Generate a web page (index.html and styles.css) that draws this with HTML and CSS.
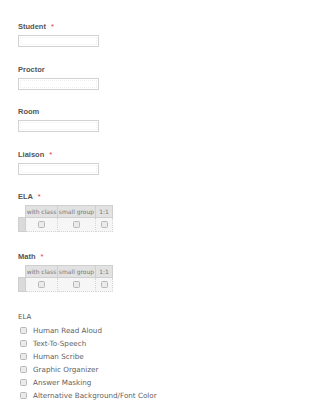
FILE: index.html
```html
<!DOCTYPE html>
<html lang="en">
<head>
    <meta charset="UTF-8">
    <meta name="viewport" content="width=device-width, initial-scale=1.0">
    <link rel="stylesheet" href="styles.css">
</head>
<body>
    <form class="form">
        <div class="field">
            <label class="label">Student <span class="req">*</span></label>
            <input class="text-input" type="text">
        </div>
        <div class="field">
            <label class="label">Proctor</label>
            <input class="text-input" type="text">
        </div>
        <div class="field">
            <label class="label">Room</label>
            <input class="text-input" type="text">
        </div>
        <div class="field">
            <label class="label">Liaison <span class="req">*</span></label>
            <input class="text-input" type="text">
        </div>

        <div class="field field-matrix">
            <label class="label">ELA <span class="req">*</span></label>
            <table class="matrix">
                <tr>
                    <th class="stub-head"></th>
                    <th class="col-a">with class</th>
                    <th class="col-b">small group</th>
                    <th class="col-c">1:1</th>
                </tr>
                <tr>
                    <td class="stub"></td>
                    <td><span class="box"></span></td>
                    <td><span class="box"></span></td>
                    <td><span class="box"></span></td>
                </tr>
            </table>
        </div>

        <div class="field field-matrix">
            <label class="label">Math <span class="req">*</span></label>
            <table class="matrix">
                <tr>
                    <th class="stub-head"></th>
                    <th class="col-a">with class</th>
                    <th class="col-b">small group</th>
                    <th class="col-c">1:1</th>
                </tr>
                <tr>
                    <td class="stub"></td>
                    <td><span class="box"></span></td>
                    <td><span class="box"></span></td>
                    <td><span class="box"></span></td>
                </tr>
            </table>
        </div>

        <div class="field checklist">
            <label class="label label-plain">ELA</label>
            <div class="option"><span class="box"></span>Human Read Aloud</div>
            <div class="option"><span class="box"></span>Text-To-Speech</div>
            <div class="option"><span class="box"></span>Human Scribe</div>
            <div class="option"><span class="box"></span>Graphic Organizer</div>
            <div class="option"><span class="box"></span>Answer Masking</div>
            <div class="option"><span class="box"></span>Alternative Background/Font Color</div>
        </div>
    </form>
</body>
</html>
```

FILE: styles.css
```css
body {
    margin: 0;
    padding: 0;
    background-color: #FFFFFF;
    color: #555;
    font-family: 'DejaVu Sans', Verdana, sans-serif;
    overflow: hidden;
}
.form {
    padding: 22px 0 0 18px;
}
.field {
    margin-bottom: 17.5px;
}
.label {
    display: block;
    height: 10px;
    line-height: 10px;
    margin-bottom: 3px;
    font-family: 'Liberation Sans', Arial, sans-serif;
    font-size: 7.5px;
    font-weight: bold;
    color: #555;
}
.req {
    color: #e53935;
    margin-left: 3px;
    font-weight: normal;
}
.text-input {
    display: block;
    box-sizing: border-box;
    width: 81px;
    height: 12px;
    margin: 0;
    padding: 0;
    border: 1px solid #d2d2d2;
    background-color: #fff;
    outline: 1px dotted #f0f0f0;
    outline-offset: -3px;
}
.field-matrix {
    margin-bottom: 20px;
}
.matrix {
    border-collapse: collapse;
    table-layout: fixed;
    width: 94px;
    font-size: 6px;
    line-height: 8px;
}
.matrix th {
    box-sizing: border-box;
    height: 12px;
    padding: 0;
    font-weight: normal;
    color: #777;
    background-color: #e2e2e2;
    border: 1px solid #cfcfcf;
    text-align: center;
    white-space: nowrap;
    overflow: hidden;
}
.matrix th.stub-head {
    background-color: #fff;
    border: none;
}
.matrix .stub-head { width: 7px; }
.matrix .col-a { width: 32px; }
.matrix .col-b { width: 38px; }
.matrix .col-c { width: 17px; }
.matrix td {
    box-sizing: border-box;
    height: 14px;
    padding: 0;
    line-height: 0;
    text-align: center;
    vertical-align: middle;
    background-color: #f6f6f6;
    border: 1px dotted #d6d6d6;
}
.matrix td.stub {
    background-color: #dadada;
    border: 1px solid #cfcfcf;
}
.box {
    display: inline-block;
    box-sizing: border-box;
    width: 7px;
    height: 7px;
    border: 1px solid #b8b8b8;
    border-radius: 1.5px;
    background-color: #ebebeb;
    vertical-align: middle;
}
.checklist .label-plain {
    font-family: 'DejaVu Sans', Verdana, sans-serif;
    font-weight: normal;
    font-size: 7px;
    margin-bottom: 2px;
}
.option {
    display: flex;
    align-items: center;
    height: 13px;
    padding-left: 2px;
    font-size: 7.2px;
    color: #5f5f5f;
}
.option .box {
    margin-right: 6px;
}
```
